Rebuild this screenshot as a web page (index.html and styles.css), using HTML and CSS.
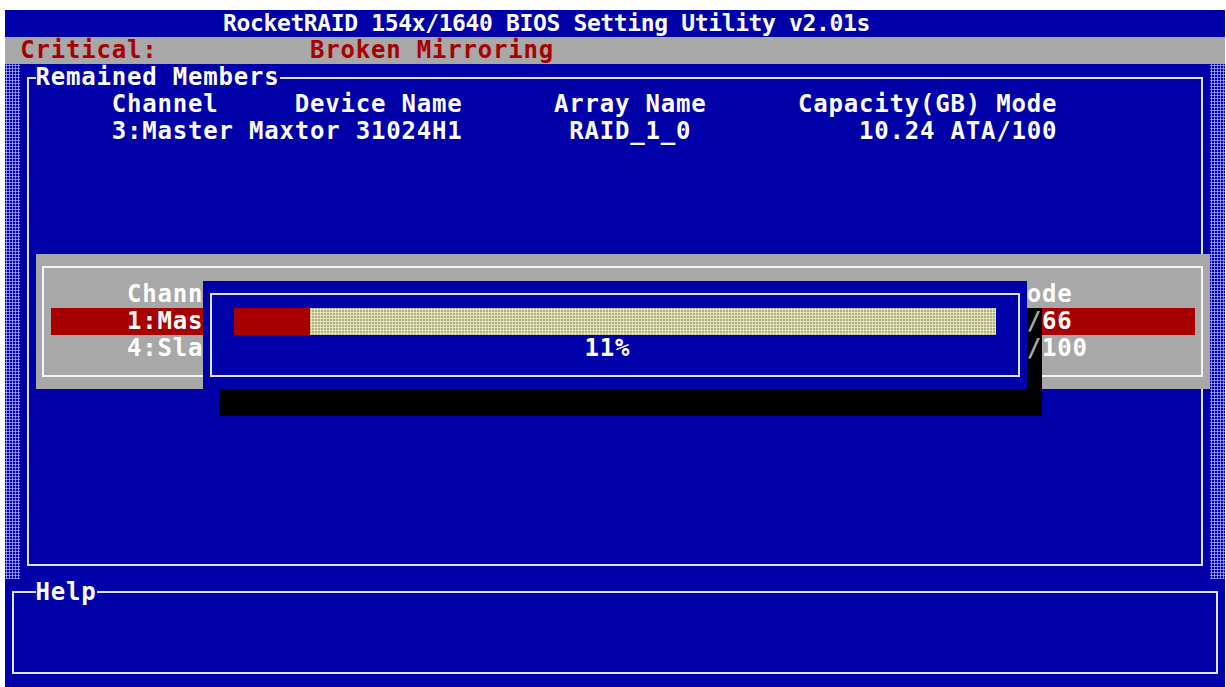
FILE: index.html
```
<!DOCTYPE html>
<html lang="en">
<head>
<meta charset="utf-8">
<title>RocketRAID BIOS Setting Utility</title>
<link rel="stylesheet" href="styles.css">
</head>
<body>
<div class="screen">
  <div class="title">RocketRAID 154x/1640 BIOS Setting Utility v2.01s</div>
  <div class="status"><span class="status-label">Critical:</span><span>Broken Mirroring</span></div>

  <div class="shade shade-left"></div>
  <div class="shade shade-right"></div>

  <div class="frame members-frame"></div>
  <div class="t legend members-legend">Remained Members</div>
  <div class="t ln-3 at-7">Channel</div>
  <div class="t ln-3 at-19">Device Name</div>
  <div class="t ln-3 at-36">Array Name</div>
  <div class="t ln-3 at-52">Capacity(GB) Mode</div>
  <div class="t ln-4 at-7">3:Master Maxtor 31024H1</div>
  <div class="t ln-4 at-37">RAID_1_0</div>
  <div class="t ln-4 at-56">10.24</div>
  <div class="t ln-4 at-62">ATA/100</div>

  <div class="frame help-frame"></div>
  <div class="t legend help-legend">Help</div>

  <div class="select-dialog"></div>
  <div class="frame select-frame"></div>
  <div class="select-highlight"></div>
  <div class="t on-grey ln-10 at-8">Channel</div>
  <div class="t on-grey ln-10 at-66">Mode</div>
  <div class="t on-grey ln-11 at-8">1:Master</div>
  <div class="t on-grey ln-11 at-64">ATA</div>
  <div class="t on-grey ln-11 at-68">66</div>
  <div class="t on-grey ln-12 at-8">4:Slave</div>
  <div class="t on-grey ln-12 at-64">ATA</div>
  <div class="t on-grey ln-12 at-68">100</div>

  <div class="progress-dialog"></div>
  <div class="frame progress-frame"></div>
  <div class="progress-bar"><div class="progress-done"></div><div class="progress-rest"></div></div>
  <div class="t progress-pct">11%</div>
  <div class="shadow shadow-right"><span class="t">/</span><span class="t">/</span></div>
  <div class="shadow shadow-bottom"></div>
</div>
</body>
</html>
```
FILE: styles.css
```
* { box-sizing: border-box; }
html, body { margin: 0; background: #ffffff; }
body { padding: 10px 0 0 5px; }

.screen {
  --cw: 15.25px;
  --rh: 27.08px;
  --blue: #0000a8;
  --grey: #a8a8a8;
  --red: #a80000;
  --line: #e0e0ff;
  width: 1220px;
  height: 677px;
  display: grid;
  grid-template-columns: repeat(80, var(--cw));
  grid-template-rows: repeat(25, var(--rh));
  background: var(--blue);
  color: #fcfcfc;
  font-family: "DejaVu Sans Mono", "Liberation Mono", monospace;
  font-weight: bold;
  font-size: 24px;
  line-height: var(--rh);
  letter-spacing: 0.8px;
  overflow: hidden;
}

.t { white-space: pre; z-index: 2; }

.title {
  grid-row: 1;
  grid-column: 1 / -1;
  padding-left: 218px;
  font-size: 23px;
  letter-spacing: -0.37px;
  white-space: pre;
}

.status {
  grid-row: 2;
  grid-column: 1 / -1;
  background: var(--grey);
  color: var(--red);
  display: flex;
  padding-left: var(--cw);
  white-space: pre;
}
.status-label { width: calc(var(--cw) * 19); }

/* row / column placement */
.ln-3 { grid-row: 4; }
.ln-4 { grid-row: 5; }
.ln-10 { grid-row: 11; }
.ln-11 { grid-row: 12; }
.ln-12 { grid-row: 13; }
.at-7 { grid-column: 8; }
.at-8 { grid-column: 9; }
.at-19 { grid-column: 20; }
.at-36 { grid-column: 37; }
.at-37 { grid-column: 38; }
.at-52 { grid-column: 53; }
.at-56 { grid-column: 57; }
.at-62 { grid-column: 63; }
.at-64 { grid-column: 65; }
.at-66 { grid-column: 67; }
.at-68 { grid-column: 69; }

/* shaded side strips */
.shade {
  grid-row: 3 / 22;
  background-color: var(--blue);
  background-image: radial-gradient(circle, #a0a0ff 0 0.9px, transparent 1.4px);
  background-size: 3px 3px;
}
.shade-left { grid-column: 1 / 2; }
.shade-right { grid-column: 80 / 81; }

/* box frames drawn through the middle of the border cells */
.frame {
  border: 2px solid var(--line);
  margin: calc(var(--rh) / 2 - 1px) calc(var(--cw) / 2 - 1px);
  z-index: 1;
}
.members-frame { grid-column: 2 / 80; grid-row: 3 / 22; }
.help-frame { grid-column: 1 / 81; grid-row: 22 / 26; }

.legend { background: var(--blue); z-index: 2; }
.members-legend { grid-row: 3; grid-column: 3 / span 16; }
.help-legend { grid-row: 22; grid-column: 3 / span 4; }

/* grey selection dialog */
.select-dialog { grid-column: 3 / 80; grid-row: 10 / 15; background: var(--grey); z-index: 3; }
.select-frame { grid-column: 3 / 80; grid-row: 10 / 15; border-color: #f4f4f4; z-index: 4; }
.select-highlight { grid-column: 4 / 79; grid-row: 12; background: var(--red); z-index: 4; }
.on-grey { z-index: 5; color: #fcfcfc; }

/* progress dialog */
.progress-dialog { grid-column: 14 / 68; grid-row: 11 / 15; background: var(--blue); z-index: 6; }
.progress-frame { grid-column: 14 / 68; grid-row: 11 / 15; z-index: 7; }
.progress-bar { grid-column: 16 / 66; grid-row: 12; display: flex; z-index: 7; }
.progress-done { width: calc(var(--cw) * 5); background: var(--red); }
.progress-rest {
  flex: 1;
  background-color: #b0b084;
  background-image: radial-gradient(circle, #ecebc4 0 0.9px, transparent 1.4px);
  background-size: 3px 3px;
}
.progress-pct { grid-column: 39; grid-row: 13; z-index: 7; }

.shadow { background: #000000; z-index: 6; }
.shadow-right {
  grid-column: 68 / 69;
  grid-row: 12 / 15;
  display: flex;
  flex-direction: column;
  color: #a8a8a8;
}
.shadow-right .t { height: var(--rh); }
.shadow-bottom { grid-column: 15 / 69; grid-row: 15 / 16; }
```
